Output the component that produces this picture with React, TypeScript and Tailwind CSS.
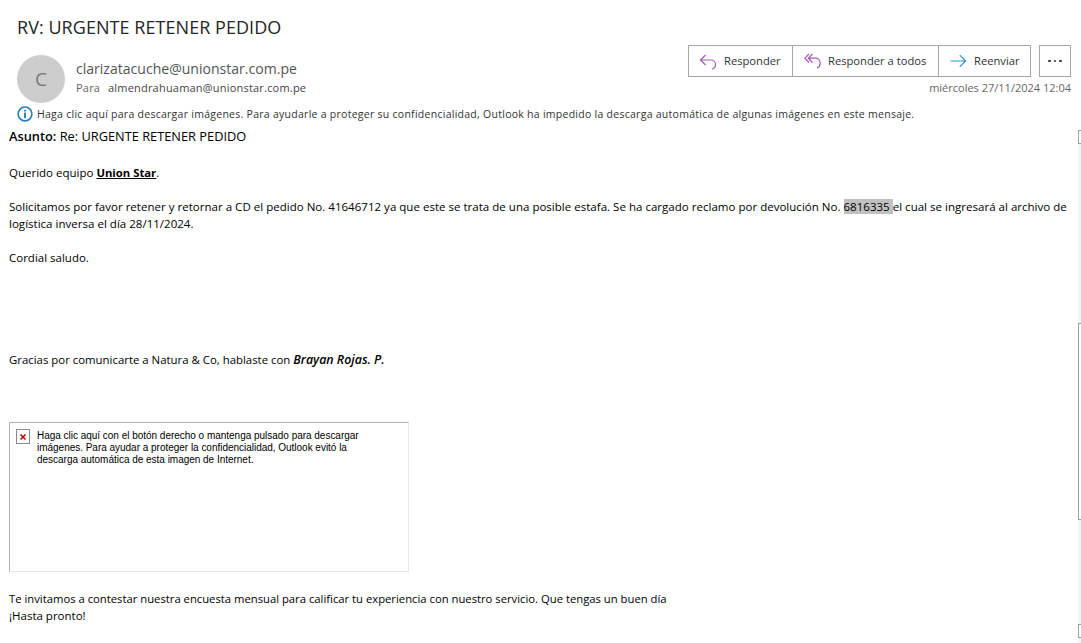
import React from "react";

const Reply = () => (
  <svg width="18" height="18" viewBox="0 0 18 18" fill="none" stroke="#a55ab0" strokeWidth="1.2" className="shrink-0">
    <path d="M6.5 3 1.5 8l5 5M1.5 8H12a4.5 4.5 0 0 1 4.5 4.5A4.5 4.5 0 0 1 13 17" />
  </svg>
);
const ReplyAll = () => (
  <svg width="18" height="18" viewBox="0 0 18 18" fill="none" stroke="#a55ab0" strokeWidth="1.2" className="shrink-0">
    <path d="M5 2 .8 6.2 5 10.5M8.5 2 4.3 6.2l4.2 4.3M4.3 6.2H11.5a4.5 4.5 0 0 1 4.5 4.5A5 5 0 0 1 13 16" />
  </svg>
);
const Forward = () => (
  <svg width="18" height="14" viewBox="0 0 18 14" fill="none" stroke="#2f8fce" strokeWidth="1.2" className="shrink-0">
    <path d="M.5 7h15M9.8 1.2 15.6 7l-5.8 5.8" />
  </svg>
);
const Info = () => (
  <svg width="16" height="16" viewBox="0 0 16 16" fill="none" className="shrink-0">
    <circle cx="8" cy="8" r="6.9" stroke="#1a7bbf" strokeWidth="1.5" />
    <rect x="7.2" y="3.8" width="1.6" height="1.7" fill="#155f96" />
    <rect x="7.2" y="6.6" width="1.6" height="5.6" fill="#155f96" />
  </svg>
);
const Broken = () => (
  <svg width="14" height="15" viewBox="0 0 14 15" fill="none" className="shrink-0">
    <rect x=".5" y=".5" width="13" height="14" fill="#fff" stroke="#8a8a8a" />
    <path d="M4.5 5.5l5 5M9.5 5.5l-5 5" stroke="#c00000" strokeWidth="1.5" />
  </svg>
);

export default function App() {
  return (
    <div className="flex h-[643px] w-[1081px] overflow-hidden bg-white font-['Open_Sans','Noto_Sans',sans-serif] text-black">
      <div className="flex min-w-0 flex-1 flex-col">
        <header className="shrink-0">
          <h1 className="pl-[17px] pt-[15px] text-[18px] leading-[24px] tracking-[0.05px] text-[#262626]">RV: URGENTE RETENER PEDIDO</h1>
          <div className="flex pl-[17px] pr-[7px] pt-[6px]">
            <div className="mt-[10px] flex h-[48px] w-[48px] shrink-0 items-center justify-center rounded-full bg-[#cdcdcd] text-[19px] text-[#777]">C</div>
            <div className="ml-[11px] mt-[14px] min-w-0 flex-1">
              <div className="text-[14.05px] leading-[20px] text-[#555]">clarizatacuche@unionstar.com.pe</div>
              <div className="mt-[1px] flex text-[11px] leading-[16px] tracking-[0.2px] text-[#444]">
                <span className="w-[32px] text-[#666]">Para</span>
                <span>almendrahuaman@unionstar.com.pe</span>
              </div>
            </div>
            <div className="flex flex-col items-end">
              <div className="flex gap-[8px]">
                <div className="flex h-[32px] items-center border border-[#a6a6a6] text-[11.2px] text-[#333]">
                  <button className="flex h-full w-[103px] items-center gap-[7px] pl-[10px]"><Reply />Responder</button>
                  <button className="flex h-full w-[146px] items-center gap-[6px] border-l border-[#a6a6a6] pl-[11px]"><ReplyAll />Responder a todos</button>
                  <button className="flex h-full w-[92px] items-center gap-[6px] border-l border-[#a6a6a6] pl-[11px]"><Forward />Reenviar</button>
                </div>
                <button className="flex h-[32px] w-[32px] items-center justify-center gap-[3px] border border-[#a6a6a6]">
                  <span className="h-[2.5px] w-[2.5px] rounded-full bg-[#333]" />
                  <span className="h-[2.5px] w-[2.5px] rounded-full bg-[#333]" />
                  <span className="h-[2.5px] w-[2.5px] rounded-full bg-[#333]" />
                </button>
              </div>
              <div className="mt-[3px] text-[11px] leading-[16px] text-[#666]">miércoles 27/11/2024 12:04</div>
            </div>
          </div>
          <div className="mt-[3px] flex items-center gap-[4px] pl-[17px] text-[10.5px] leading-[16px] tracking-[0.27px] text-[#333]">
            <Info />
            <span>Haga clic aquí para descargar imágenes. Para ayudarle a proteger su confidencialidad, Outlook ha impedido la descarga automática de algunas imágenes en este mensaje.</span>
          </div>
        </header>
        <main className="pl-[9px] pr-[8px] pt-[6px] text-[11.5px] leading-[17px]">
          <p className="text-[12.8px]"><b className="font-semibold">Asunto:</b> Re: URGENTE RETENER PEDIDO</p>
          <p className="mt-[19px]">Querido equipo <b className="text-[11.3px] font-bold underline">Union Star</b>.</p>
          <p className="mt-[17px] tracking-[0.02px]">
            Solicitamos por favor retener y retornar a CD el pedido No. 41646712 ya que este se trata de una posible estafa. Se ha cargado reclamo por devolución No. <span className="bg-[#c0c0c0]">6816335 </span>el cual se ingresará al archivo de logística inversa el día 28/11/2024.
          </p>
          <p className="mt-[17px]">Cordial saludo.</p>
          <p className="mt-[85px] text-[11.4px]">Gracias por comunicarte a Natura &amp; Co, hablaste con <b className="text-[12.4px] font-semibold italic">Brayan Rojas. P.</b></p>
          <div className="mt-[54px] flex h-[150px] w-[400px] items-start gap-[7px] border border-[#b4b4b4] border-r-[#e8e8e8] border-b-[#e8e8e8] pl-[6px] pr-[30px] pt-[6px]">
            <Broken />
            <p className="mt-[1px] font-['Liberation_Sans',sans-serif] text-[10px] leading-[12px] tracking-[-0.02px]">Haga clic aquí con el botón derecho o mantenga pulsado para descargar imágenes. Para ayudar a proteger la confidencialidad, Outlook evitó la descarga automática de esta imagen de Internet.</p>
          </div>
          <p className="mt-[18px] text-[11.28px]">Te invitamos a contestar nuestra encuesta mensual para calificar tu experiencia con nuestro servicio. Que tengas un buen día</p>
          <p>¡Hasta pronto!</p>
        </main>
      </div>
      <div className="mt-[130px] flex w-[3px] shrink-0 flex-col bg-[#f3f3f3]">
        <div className="h-[14px] border border-r-0 border-[#a0a0a0] bg-white" />
        <div className="mt-[179px] h-[197px] border border-r-0 border-[#a0a0a0] bg-white" />
        <div className="mt-[104px] h-[14px] border border-r-0 border-[#a0a0a0] bg-white" />
      </div>
    </div>
  );
}
